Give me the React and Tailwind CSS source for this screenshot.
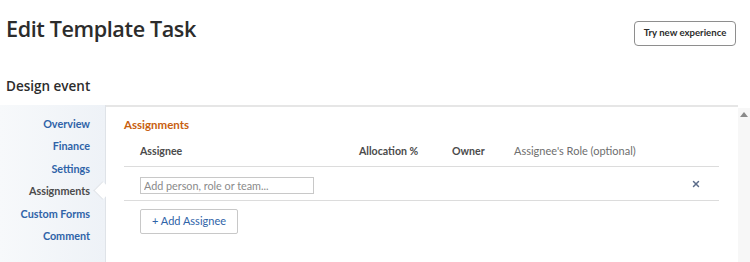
import { X } from "lucide-react";

const navItems = [
  { label: "Overview" },
  { label: "Finance" },
  { label: "Settings" },
  { label: "Assignments", active: true },
  { label: "Custom Forms" },
  { label: "Comment" },
];

const App = () => {
  return (
    <div className="w-[750px] h-[262px] overflow-hidden bg-white font-['Lato',sans-serif] text-[#2c2c2c]">
      <div className="flex justify-between items-start pl-[6px] pr-[14px] pt-[14px]">
        <h1 className="font-['Open_Sans',sans-serif] font-semibold text-[21.6px] leading-[29px] tracking-[-0.4px] text-[#2c2c2c]">
          Edit Template Task
        </h1>
        <button className="mt-[7px] h-[25px] w-[102px] border border-[#8e8e8e] rounded-[4px] text-[9.6px] font-bold text-[#2c2c2c]">
          Try new experience
        </button>
      </div>

      <h2 className="mt-[31px] pl-[6px] font-['Open_Sans',sans-serif] font-semibold text-[13.5px] leading-[18px] text-[#2c2c2c]">
        Design event
      </h2>

      <div className="mt-[10px] flex h-[160px]">
        <nav className="relative w-[106px] shrink-0 border-r border-[#dfe3e8] bg-gradient-to-r from-[#f7f9fb] to-[#eef2f7] pt-[11px] pr-[15px] flex flex-col items-end gap-[6px]">
          {navItems.map((item) => (
            <a
              key={item.label}
              className={`relative text-[10.8px] leading-[16.4px] font-bold ${
                item.active ? "text-[#4b4b4b]" : "text-[#2f63a8]"
              }`}
            >
              {item.label}
              {item.active && (
                <span className="absolute right-[-19px] top-[1px] w-[13px] h-[13px] rotate-45 bg-white border-l border-b border-[#dfe3e8]" />
              )}
            </a>
          ))}
        </nav>

        <div className="flex-1 border-t-2 border-[#e6e6e6] pl-[18px] pr-[19px] pt-[10px]">
          <h3 className="text-[11.5px] font-bold text-[#c8600f] leading-[16px]">Assignments</h3>

          <div className="mt-[4px] flex items-center h-[30px] border-b border-[#dcdcdc] text-[10.6px] text-[#4b4b4b]">
            <div className="w-[235px] pl-[16px] font-bold">Assignee</div>
            <div className="w-[93px] font-bold">Allocation %</div>
            <div className="w-[62px] font-bold">Owner</div>
            <div className="flex-1 text-[#6e6e6e] text-[11px]">Assignee's Role (optional)</div>
          </div>

          <div className="flex items-center h-[34px] border-b border-[#dcdcdc]">
            <div className="pl-[16px] flex-1">
              <input
                placeholder="Add person, role or team..."
                className="w-[174px] h-[17px] border border-[#c8c8c8] px-[3px] text-[10.8px] placeholder:text-[#8a8a8a] outline-none"
              />
            </div>
            <X size={10} strokeWidth={3.5} className="mr-[18px] text-[#5d6d8a]" />
          </div>

          <button className="mt-[8px] ml-[16px] h-[25px] w-[98px] border border-[#c8c8c8] rounded-[2px] text-[11px] text-[#2f63a8]">
            + Add Assignee
          </button>
        </div>

        <div className="w-[12px] shrink-0 bg-[#f7f7f7] mt-[3px] flex justify-center pt-[4px]">
          <div className="w-0 h-0 border-l-[4px] border-r-[4px] border-b-[5px] border-l-transparent border-r-transparent border-b-[#8a8a8a]" />
        </div>
      </div>
    </div>
  );
};

export default App;
